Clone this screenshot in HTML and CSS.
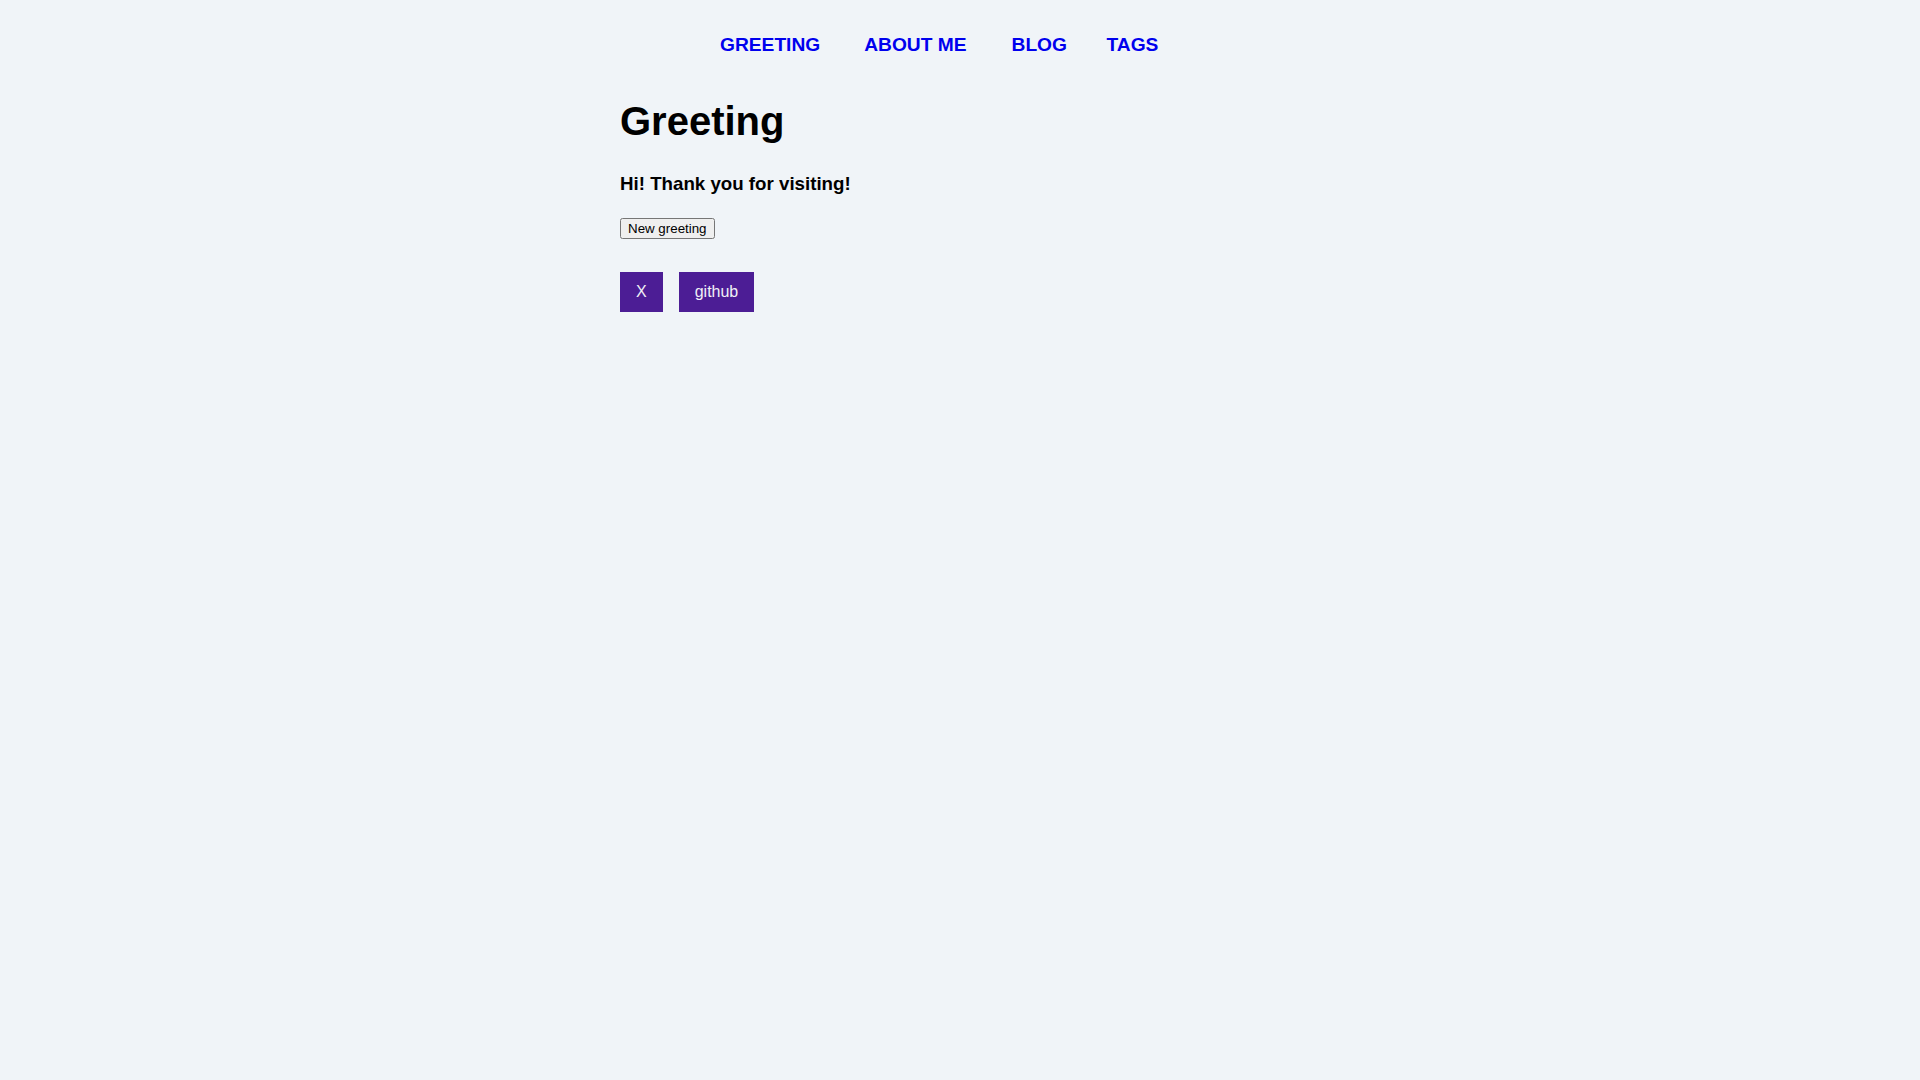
FILE: index.html
```html
<!DOCTYPE html>
<html lang="en">
<head>
<meta charset="utf-8">
<title>Greeting</title>
<link rel="stylesheet" href="styles.css">
</head>
<body>
<div class="page">
  <nav class="nav">
    <a href="#" class="nav-link nav-greeting">GREETING</a>
    <a href="#" class="nav-link nav-about">ABOUT ME</a>
    <a href="#" class="nav-link nav-blog">BLOG</a>
    <a href="#" class="nav-link nav-tags">TAGS</a>
  </nav>
  <main class="content">
    <h1 class="title">Greeting</h1>
    <h3 class="message">Hi! Thank you for visiting!</h3>
    <div class="actions">
      <button class="greet-btn" type="button">New greeting</button>
    </div>
    <div class="socials">
      <a href="#" class="social">X</a>
      <a href="#" class="social">github</a>
    </div>
  </main>
</div>
</body>
</html>
```
FILE: styles.css
```css
html, body {
  margin: 0;
  padding: 0;
}
body {
  background: #f0f4f8;
  font-family: "Liberation Sans", Arial, sans-serif;
  color: #000;
}
.page {
  width: 680px;
  margin: 0 auto;
}
.nav {
  display: flex;
  padding-top: 34px;
  padding-left: 100px;
  font-size: 19.2px;
  font-weight: bold;
  line-height: 22px;
}
.nav-link {
  color: #0000ee;
  text-decoration: none;
}
.nav-about {
  margin-left: 44px;
}
.nav-blog {
  margin-left: 45px;
}
.nav-tags {
  margin-left: 39.5px;
}
.content {
  display: flex;
  flex-direction: column;
  align-items: flex-start;
}
.title {
  margin: 42px 0 0;
  font-size: 40px;
  line-height: 46px;
  font-weight: bold;
}
.message {
  margin: 29px 0 0;
  font-size: 18.72px;
  line-height: 21.5px;
  font-weight: bold;
}
.actions {
  margin-top: 23px;
}
.greet-btn {
  font-family: "Liberation Sans", Arial, sans-serif;
  font-size: 13.333px;
}
.socials {
  display: flex;
  gap: 16px;
  margin-top: 33px;
}
.social {
  display: block;
  background: #4c1d95;
  color: #f0f0f5;
  text-decoration: none;
  font-size: 16px;
  line-height: 20px;
  padding: 10px 16px;
}
```
